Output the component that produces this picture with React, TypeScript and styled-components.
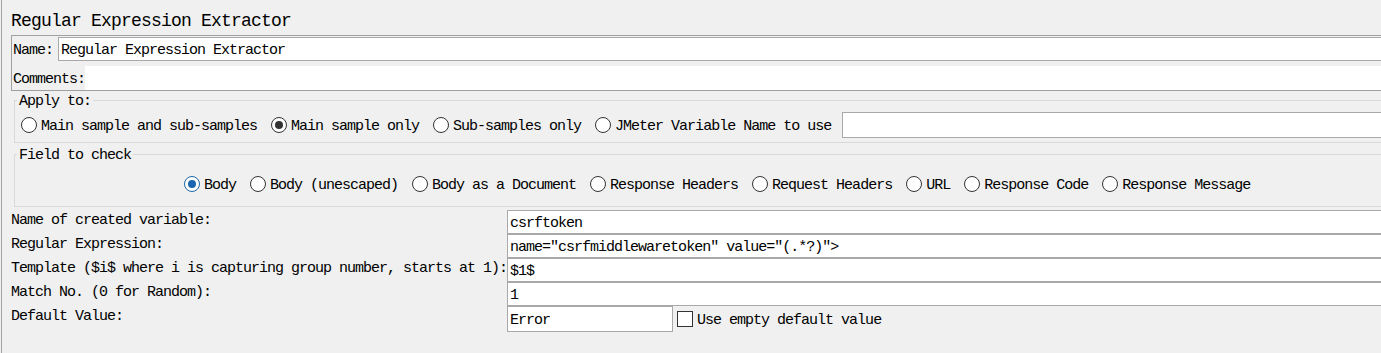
import React from "react";
import styled, { createGlobalStyle } from "styled-components";

const GlobalStyle = createGlobalStyle`
  html, body {
    margin: 0;
    padding: 0;
    background: #f0f0f0;
    overflow: hidden;
  }
  body {
    font-family: "Liberation Mono", "Noto Sans CJK SC", monospace;
  }
`;

const applyOptions = [
  { label: "Main sample and sub-samples", checked: false },
  { label: "Main sample only", checked: true },
  { label: "Sub-samples only", checked: false },
  { label: "JMeter Variable Name to use", checked: false },
];

const fieldOptions = [
  "Body",
  "Body (unescaped)",
  "Body as a Document",
  "Response Headers",
  "Request Headers",
  "URL",
  "Response Code",
  "Response Message",
];

const extractorRows = [
  { label: "Name of created variable:", value: "csrftoken" },
  { label: "Regular Expression:", value: 'name="csrfmiddlewaretoken" value="(.*?)">' },
  { label: "Template ($i$ where i is capturing group number, starts at 1):", value: "$1$" },
  { label: "Match No. (0 for Random):", value: "1" },
];

const Radio: React.FC<{ label: string; checked?: boolean; accent?: boolean }> = ({ label, checked, accent }) => (
  <RadioItem>
    <RadioCircle $checked={checked} $accent={accent} />
    <Text>{label}</Text>
  </RadioItem>
);

const App: React.FC = () => {
  return (
    <>
      <GlobalStyle />
      <Page>
        <Title>Regular Expression Extractor</Title>

        <NameBox>
          <NameRow>
            <Text>Name:</Text>
            <NameInput readOnly defaultValue="Regular Expression Extractor" />
          </NameRow>
          <CommentsRow>
            <Text>Comments:</Text>
            <CommentsArea />
          </CommentsRow>
        </NameBox>

        <Group $top={2}>
          <Legend>Apply to:</Legend>
          <ApplyRow>
            {applyOptions.map((o) => (
              <Radio key={o.label} label={o.label} checked={o.checked} />
            ))}
            <VariableInput readOnly defaultValue="" />
          </ApplyRow>
        </Group>

        <Group $top={4}>
          <Legend>Field to check</Legend>
          <FieldRow>
            {fieldOptions.map((label, i) => (
              <Radio key={label} label={label} checked={i === 0} accent />
            ))}
          </FieldRow>
        </Group>

        <Form>
          {extractorRows.map((row) => (
            <React.Fragment key={row.label}>
              <FormLabel>{row.label}</FormLabel>
              <FormInput readOnly defaultValue={row.value} />
            </React.Fragment>
          ))}
          <FormLabel>Default Value:</FormLabel>
          <DefaultRow>
            <DefaultInput readOnly defaultValue="Error" />
            <CheckLabel>
              <CheckBox />
              <Text>Use empty default value</Text>
            </CheckLabel>
          </DefaultRow>
        </Form>
      </Page>
    </>
  );
};

const Page = styled.div`
  box-sizing: border-box;
  width: 1440px;
  height: 353px;
  margin-left: 1px;
  padding-left: 9px;
  border-left: 1px solid #a3a3a3;
  color: #000;
  font-size: 15px;
  letter-spacing: -1px;
`;

// glyphs sit a touch high compared to the original font
const Text = styled.span`
  padding-top: 2px;
  white-space: nowrap;
`;

const Title = styled.div`
  box-sizing: border-box;
  height: 35px;
  padding-top: 6px;
  display: flex;
  align-items: center;
  font-size: 18px;
  letter-spacing: -0.8px;
`;

const NameBox = styled.div`
  border: 1px solid #a0a0a0;
  padding: 1px 0 0 1px;
`;

const NameRow = styled.div`
  display: flex;
  align-items: center;
  height: 24px;
`;

const TextInput = styled.input`
  box-sizing: border-box;
  height: 24px;
  margin: 0;
  padding: 2px 2px 0;
  border: 1px solid #a9a9a9;
  border-radius: 0;
  background: #fff;
  color: #000;
  font-family: inherit;
  font-size: 15px;
  letter-spacing: -1px;
  outline: none;
`;

const NameInput = styled(TextInput)`
  flex: 1;
  margin-left: 5px;
`;

const CommentsRow = styled.div`
  display: flex;
  align-items: center;
  height: 24px;
  margin-top: 5px;
`;

const CommentsArea = styled.div`
  flex: 1;
  align-self: stretch;
  background: #fff;
`;

const Group = styled.fieldset<{ $top: number }>`
  margin: ${(p) => p.$top}px 0 0 3px;
  padding: 0 0 0 6px;
  border: 1px solid #d9d9d9;
  min-width: 0;
`;

const Legend = styled.legend`
  margin-left: -4px;
  padding: 0 2px;
  line-height: 15px;
  position: relative;
  top: 1px;
`;

const ApplyRow = styled.div`
  display: flex;
  align-items: center;
  height: 26px;
  margin: 4px 0 4px;
`;

const FieldRow = styled.div`
  display: flex;
  align-items: center;
  height: 16px;
  margin: 14px 0 14px;
  padding-left: 163px;
`;

const RadioItem = styled.label`
  display: flex;
  align-items: center;
  gap: 4px;
  margin-right: 14px;
`;

const RadioCircle = styled.span<{ $checked?: boolean; $accent?: boolean }>`
  box-sizing: border-box;
  flex: none;
  width: 16px;
  height: 16px;
  border-radius: 50%;
  border: 1px solid ${(p) => (p.$checked && p.$accent ? "#1a65ad" : "#333")};
  background: #fff;
  display: flex;
  align-items: center;
  justify-content: center;

  &::after {
    content: "";
    display: ${(p) => (p.$checked ? "block" : "none")};
    width: 8px;
    height: 8px;
    border-radius: 50%;
    background: ${(p) => (p.$accent ? "#1a65ad" : "#333")};
  }
`;

const VariableInput = styled(TextInput)`
  flex: 1;
  height: 26px;
  margin-left: -3px;
`;

const Form = styled.div`
  display: grid;
  grid-template-columns: auto 1fr;
  margin-top: 3px;
`;

const FormLabel = styled.div`
  align-self: start;
  line-height: 22px;
  white-space: nowrap;
`;

const FormInput = styled(TextInput)`
  width: 100%;
`;

const DefaultRow = styled.div`
  display: flex;
  align-items: center;
  height: 26px;
`;

const DefaultInput = styled(TextInput)`
  width: 166px;
  height: 26px;
`;

const CheckLabel = styled.label`
  display: flex;
  align-items: center;
  gap: 4px;
  margin-left: 4px;
`;

const CheckBox = styled.span`
  box-sizing: border-box;
  flex: none;
  width: 16px;
  height: 16px;
  border: 1px solid #333;
  background: #fff;
`;

export default App;
